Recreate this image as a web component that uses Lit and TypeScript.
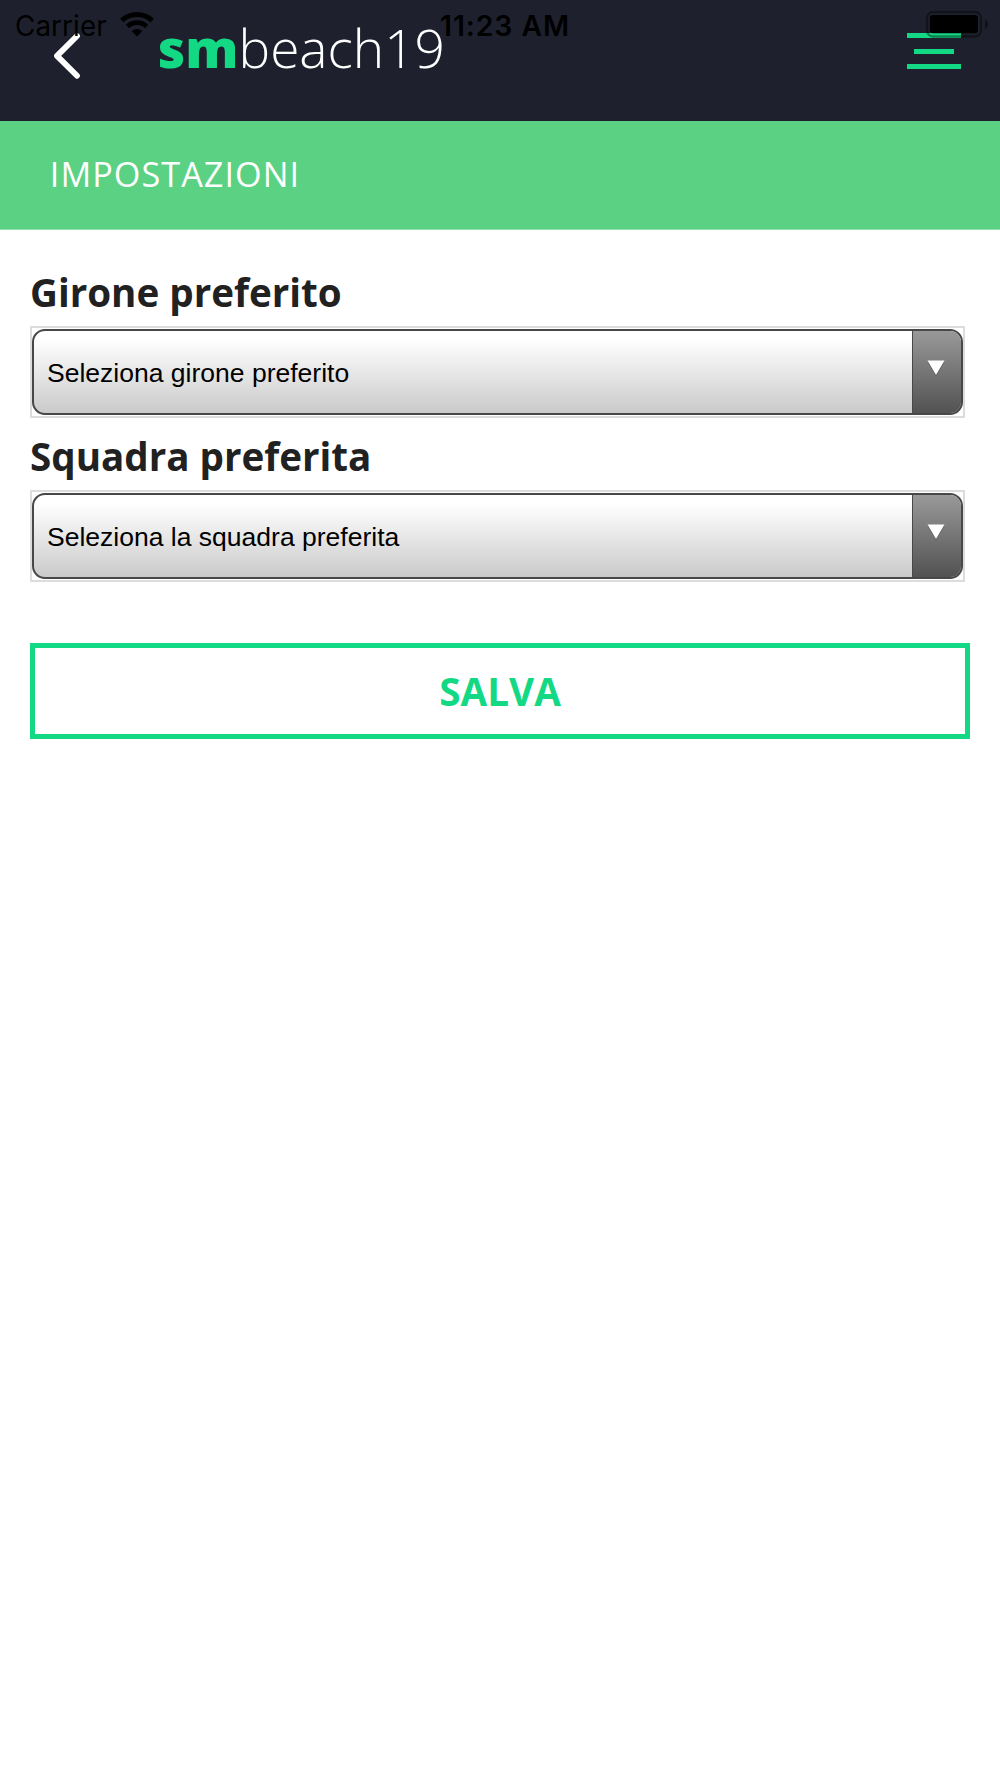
import { LitElement, html, css } from "lit";
import { customElement, property } from "lit/decorators.js";

@customElement("status-bar")
export class StatusBar extends LitElement {
  static styles = css`
    :host { display: grid; grid-template-columns: 1fr auto 1fr; height: 52px; color: #000; font-family: Inter, sans-serif; line-height: 52px; pointer-events: none; }
    .carrier { display: flex; padding-left: 15px; font-size: 27.8px; letter-spacing: 0.1px; }
    .wifi { display: block; margin: 11px 0 0 13.5px; }
    .time { font-size: 28.3px; font-weight: 600; letter-spacing: 0.95px; padding-left: 10px; }
    .battery { display: flex; justify-content: flex-end; padding: 10px 11.5px 0 0; }
  `;
  render() {
    return html`
      <div class="carrier">Carrier
        <svg class="wifi" width="34" height="26" viewBox="0 0 34 26" fill="none" stroke="#000" stroke-width="4.8">
          <path d="M1.8 9.6 A22 22 0 0 1 32.2 9.6" />
          <path d="M7.4 15.4 A14 14 0 0 1 26.6 15.4" />
          <path d="M11.8 20 A7.8 7.8 0 0 1 22.2 20 L17 25.4 Z" fill="#000" stroke="none" />
        </svg>
      </div>
      <div class="time">11:23 AM</div>
      <div class="battery">
        <svg width="64" height="28" viewBox="0 0 64 28">
          <rect x="2" y="2" width="54" height="24.5" rx="6" fill="none" stroke="#000" stroke-opacity="0.4" stroke-width="2.4" />
          <rect x="4.8" y="5" width="48.2" height="18.2" rx="3.2" />
          <path d="M60 9.3 Q63 11 63 14.2 Q63 17.4 60 19.1 Z" fill-opacity="0.45" />
        </svg>
      </div>`;
  }
}

@customElement("app-header")
export class AppHeader extends LitElement {
  static styles = css`
    :host { display: flex; align-items: flex-start; box-sizing: border-box; height: 121px; padding: 12px 39.3px 0 50px; background: #1e212d; color: #fff; }
    .back { display: block; margin-top: 19px; }
    .logo { flex: 1; margin-left: 72.8px; font: 300 53.2px/72px "Open Sans", sans-serif; }
    .brand { font-weight: 800; color: #14d984; }
    .menu { display: flex; flex-direction: column; align-items: center; gap: 10.5px; margin-top: 21.3px; }
    .line { width: 53.6px; height: 5px; background: #14d984; }
    .short { width: 40px; }
  `;
  render() {
    return html`
      <svg class="back" width="35" height="50" viewBox="0 0 35 50" fill="none" stroke="#fff" stroke-width="5.8" stroke-linecap="round" stroke-linejoin="round">
        <path d="M27 5 L7 24.9 L27 44.8" />
      </svg>
      <div class="logo"><span class="brand">sm</span>beach19</div>
      <div class="menu"><div class="line"></div><div class="line short"></div><div class="line"></div></div>`;
  }
}

@customElement("select-field")
export class SelectField extends LitElement {
  @property() label = "";
  @property() placeholder = "";
  static styles = css`
    :host { display: block; }
    .label { color: #212121; font: 700 38.6px/52px "Open Sans", sans-serif; }
    .frame { box-sizing: border-box; height: 92px; margin: 8px 5px 0 0; padding: 0.6px 0.4px; border: 2px solid #dcdcdc; }
    .control { display: flex; box-sizing: border-box; height: 100%; border: 2px solid #484848; border-radius: 13px; overflow: hidden; background: linear-gradient(#fff 10%, #cacaca); }
    .value { flex: 1; padding-left: 12.6px; color: #000; font: 26.52px/85px "Liberation Sans", Arial, sans-serif; }
    .arrow { width: 48px; border-left: 1px solid #484848; background: linear-gradient(#999, #525252); }
    .glyph { display: block; margin: 29px 0 0 14px; }
  `;
  render() {
    return html`
      <div class="label">${this.label}</div>
      <div class="frame">
        <div class="control">
          <div class="value">${this.placeholder}</div>
          <div class="arrow"><svg class="glyph" width="18" height="17" viewBox="0 0 18 17"><path d="M0.5 2 H17.5 L9 16.5 Z" fill="#444" fill-opacity="0.5" /><path d="M0.5 0.5 H17.5 L9 15 Z" fill="#fff" /></svg></div>
        </div>
      </div>`;
  }
}

@customElement("app-root")
export class AppRoot extends LitElement {
  static styles = css`
    :host { display: block; position: relative; min-height: 1778px; background: #fff; }
    .status { position: absolute; top: 0; left: 0; right: 0; }
    .banner { box-sizing: border-box; height: 109px; padding-left: 49.8px; border-bottom: 1px solid #8fdfad; background: #5bd184; color: #fff; font: 400 34.2px/106px "Open Sans", sans-serif; letter-spacing: 1.05px; }
    .form { display: flex; flex-direction: column; padding: 36px 30px 0; }
    .second { margin-top: 12px; }
    .save { box-sizing: border-box; height: 96px; margin-top: 61px; padding: 0; border: 5px solid #14d984; background: #fff; color: #14d984; text-align: center; font: 700 38.67px/86px "Open Sans", sans-serif; }
  `;
  render() {
    return html`
      <app-header></app-header>
      <status-bar class="status"></status-bar>
      <div class="banner">IMPOSTAZIONI</div>
      <div class="form">
        <select-field label="Girone preferito" placeholder="Seleziona girone preferito"></select-field>
        <select-field class="second" label="Squadra preferita" placeholder="Seleziona la squadra preferita"></select-field>
        <button class="save">SALVA</button>
      </div>`;
  }
}
